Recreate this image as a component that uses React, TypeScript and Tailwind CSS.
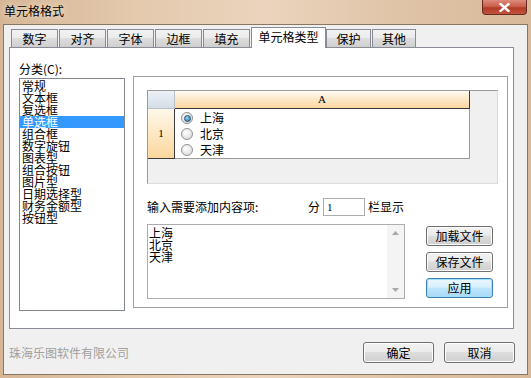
import React from "react";

const tabs = ["数字", "对齐", "字体", "边框", "填充", "单元格类型", "保护", "其他"];
const kinds = ["常规", "文本框", "复选框", "单选框", "组合框", "数字旋钮", "图表型", "组合按钮", "图片型", "日期选择型", "财务金额型", "按钮型"];
const cities = ["上海", "北京", "天津"];

const Radio = ({ on }: { on?: boolean }) => (
  <span className="w-[12px] h-[12px] rounded-full border border-[#8e8f8f] bg-[radial-gradient(circle_at_40%_35%,#ffffff,#d4d4d4)] flex items-center justify-center shrink-0">
    {on && <span className="w-[7px] h-[7px] rounded-full border border-[#1c4f78] bg-[radial-gradient(circle_at_40%_35%,#9bdaf8,#1d6aa0)]" />}
  </span>
);

const Btn = ({ children, def, w }: { children: React.ReactNode; def?: boolean; w: string }) => (
  <button
    className={
      (def
        ? "border-[#3c7fb1] bg-[linear-gradient(#eaf6fd,#d9f0fc_45%,#bee6fd_50%,#a7d9f5)] shadow-[inset_0_0_0_1px_#9de3f7] "
        : "border-[#707070] bg-[linear-gradient(#f2f2f2,#ebebeb_45%,#dddddd_50%,#cfcfcf)] shadow-[inset_0_0_0_1px_#fcfcfc] ") +
      w +
      " rounded-[3px] border text-[12px] leading-[12px] text-black flex items-center justify-center"
    }
  >
    {children}
  </button>
);

export default function App() {
  return (
    <div className="w-[531px] h-[378px] overflow-hidden flex flex-col bg-[linear-gradient(90deg,#d6b696,#e4c9ad_25%,#ead4bd_50%,#e0c4a8_75%,#d8b999)] font-['Noto_Sans_CJK_SC',sans-serif] text-black select-none">
      {/* title bar */}
      <div className="h-[24px] shrink-0 flex items-start justify-between pl-[4px] pr-[4px]">
        <span className="pt-[4px] text-[12px] leading-[14px] [text-shadow:0_0_6px_#fff8ee]">单元格格式</span>
        <div className="w-[45px] h-[15px] rounded-b-[4px] border border-t-0 border-[#6b2a22] bg-[linear-gradient(#dd8c7c,#c75a46_50%,#b13a27_55%,#c2543c)] flex items-center justify-center">
          <svg width="11" height="9" viewBox="0 0 11 9">
            <path d="M1.5 1 L9.5 8 M9.5 1 L1.5 8" stroke="#ffffff" strokeWidth="2.4" strokeLinecap="square" />
          </svg>
        </div>
      </div>

      {/* client */}
      <div className="mx-[3px] h-[351px] shrink-0 border border-[#8a7762] bg-[#f0f0f0] flex flex-col">
        {/* tabs */}
        <div className="h-[22px] flex items-end pl-[7px]">
          {tabs.map((t, i) =>
            i === 5 ? (
              <div key={t} className="relative z-10 -mb-px w-[75px] h-[21px] border border-b-0 border-[#898c95] bg-white text-[12px] leading-[14px] flex items-center justify-center pb-[2px]">
                {t}
              </div>
            ) : (
              <div
                key={t}
                className={
                  (i > 5 ? (i === 6 ? "w-[45px]" : "w-[44px]") : "w-[47px]") +
                  " mr-px h-[18px] border border-b-0 border-[#898c95] bg-[linear-gradient(#f2f2f2,#ebebeb_45%,#dddddd_50%,#cfcfcf)] text-[12px] leading-[14px] flex items-center justify-center"
                }
              >
                {t}
              </div>
            )
          )}
        </div>

        {/* tab panel */}
        <div className="ml-[5px] w-[505px] h-[282px] border border-[#898c95] bg-white flex items-start pl-[9px]">
          <div className="w-[106px] pt-[14px] flex flex-col">
            <span className="h-[14px] text-[12px] leading-[14px]">分类(C):</span>
            <div className="mt-[2px] h-[233px] border border-[#828790] bg-white flex flex-col pt-[1px]">
              {kinds.map((k, i) => (
                <div
                  key={k}
                  className={(i === 3 ? "bg-[#3399ff] text-white " : "") + "h-[12px] text-[12px] leading-[12px] pl-[2px] whitespace-nowrap"}
                >
                  {k}
                </div>
              ))}
            </div>
          </div>

          {/* right group */}
          <div className="ml-[8px] mt-[28px] w-[375px] h-[232px] border border-[#a0a0a0] flex flex-col">
            {/* grid preview */}
            <div className="ml-[13px] mt-[13px] w-[351px] h-[94px] border border-[#9a9a9a] border-r-[#dcdcdc] border-b-[#dcdcdc] bg-[#f0f0f0] flex flex-col">
              <div className="flex">
                <div className="w-[27px] h-[18px] border-r border-b border-[#b8c0cc] bg-[linear-gradient(#edf1f6,#d5dde8)]" />
                <div className="w-[295px] h-[18px] border-r border-b border-[#3a3a3a] bg-[linear-gradient(#fffaf0,#f9d6a0)] text-[11px] leading-[16px] text-center font-['Liberation_Serif',serif]">
                  A
                </div>
              </div>
              <div className="flex">
                <div className="w-[27px] h-[50px] border-r border-b border-[#3a3a3a] bg-[linear-gradient(#fff8ea,#fbd79e)] text-[11px] font-['Liberation_Serif',serif] flex items-center justify-center">
                  1
                </div>
                <div className="w-[295px] h-[50px] border-r border-b border-[#9a9a9a] bg-white flex flex-col pt-px pl-[6px]">
                  {cities.map((c, i) => (
                    <div key={c} className="h-[16px] flex items-center gap-[7px]">
                      <Radio on={i === 0} />
                      <span className="text-[12px] leading-[14px]">{c}</span>
                    </div>
                  ))}
                </div>
              </div>
            </div>

            {/* input row */}
            <div className="ml-[13px] mt-[14px] h-[18px] flex items-center text-[12px] leading-[14px]">
              <span className="w-[161px]">输入需要添加内容项:</span>
              <span className="w-[15px]">分</span>
              <div className="w-[42px] h-[18px] border border-[#abadb3] bg-white pl-[3px] text-[11px] leading-[16px] font-['Liberation_Serif',serif]">1</div>
              <span className="ml-[3px]">栏显示</span>
            </div>

            {/* list + buttons */}
            <div className="ml-[13px] mt-[8px] flex items-start">
              <div className="w-[258px] h-[75px] border border-[#abadb3] bg-white flex">
                <div className="flex-1 pt-[2px] pl-px flex flex-col">
                  {cities.map((c) => (
                    <span key={c} className="text-[12px] leading-[12px]">{c}</span>
                  ))}
                </div>
                <div className="w-[17px] bg-[#f4f4f4] flex flex-col items-center justify-between py-[6px]">
                  <svg width="7" height="4" viewBox="0 0 7 4"><path d="M0 4 L3.5 0 L7 4 Z" fill="#a8a8a8" /></svg>
                  <svg width="7" height="4" viewBox="0 0 7 4"><path d="M0 0 L3.5 4 L7 0 Z" fill="#a8a8a8" /></svg>
                </div>
              </div>
              <div className="ml-[21px] pt-[2px] flex flex-col gap-[6px]">
                <Btn w="w-[67px] h-[20px]">加载文件</Btn>
                <Btn w="w-[67px] h-[20px]">保存文件</Btn>
                <Btn w="w-[67px] h-[20px]" def>应用</Btn>
              </div>
            </div>
          </div>
        </div>

        {/* bottom row */}
        <div className="mt-[13px] h-[21px] flex items-center justify-between pl-[5px] pr-[12px]">
          <span className="text-[12px] leading-[14px] text-[#a0a0a0]">珠海乐图软件有限公司</span>
          <div className="flex gap-[10px]">
            <Btn w="w-[71px] h-[21px]">确定</Btn>
            <Btn w="w-[71px] h-[21px]">取消</Btn>
          </div>
        </div>
      </div>
    </div>
  );
}
